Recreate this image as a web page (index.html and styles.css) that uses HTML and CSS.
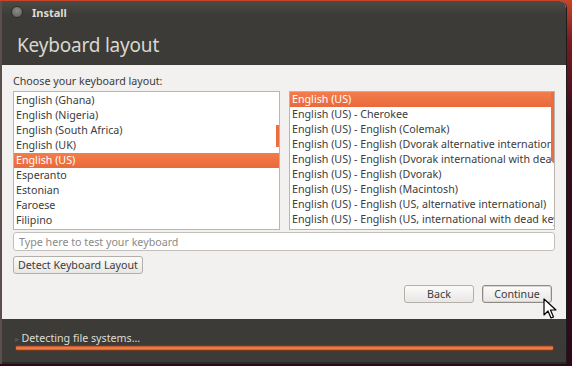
FILE: index.html
```html
<!DOCTYPE html>
<html lang="en">
<head>
  <meta charset="UTF-8" />
  <title>Install</title>
  <link rel="stylesheet" href="styles.css">
</head>
<body>

<div class="window">
  <!-- Title bar -->
  <div class="titlebar">
    <div class="title-row">
      <span class="close-btn"></span>
      <span class="title">Install</span>
    </div>
    <h1>Keyboard layout</h1>
  </div>

  <!-- Page content -->
  <div class="content">
    <div class="label">Choose your keyboard layout:</div>
    <div class="lists">
      <div class="list left-list">
        <div class="item">English (Ghana)</div>
        <div class="item">English (Nigeria)</div>
        <div class="item">English (South Africa)</div>
        <div class="item">English (UK)</div>
        <div class="item selected">English (US)</div>
        <div class="item">Esperanto</div>
        <div class="item">Estonian</div>
        <div class="item">Faroese</div>
        <div class="item">Filipino</div>
        <div class="thumb thumb-left"></div>
      </div>
      <div class="list right-list">
        <div class="item selected">English (US)</div>
        <div class="item">English (US) - Cherokee</div>
        <div class="item">English (US) - English (Colemak)</div>
        <div class="item">English (US) - English (Dvorak alternative international no dead keys)</div>
        <div class="item">English (US) - English (Dvorak international with dead keys)</div>
        <div class="item">English (US) - English (Dvorak)</div>
        <div class="item">English (US) - English (Macintosh)</div>
        <div class="item">English (US) - English (US, alternative international)</div>
        <div class="item">English (US) - English (US, international with dead keys)</div>
        <div class="thumb thumb-right"></div>
      </div>
    </div>
    <input class="test-input" type="text" placeholder="Type here to test your keyboard" />
    <div class="detect-row">
      <button class="btn">Detect Keyboard Layout</button>
    </div>
    <div class="nav-row">
      <button class="btn nav-btn">Back</button>
      <button class="btn nav-btn focused">Continue</button>
    </div>
    <svg class="cursor" width="14" height="22" viewBox="0 0 14 22">
      <path d="M1 1 L1 17 L5 13 L8 20 L10.5 19 L7.5 12 L13 12 Z" fill="#fff" stroke="#000" stroke-width="1.2" stroke-linejoin="round"/>
    </svg>
  </div>

  <!-- Progress area -->
  <div class="progress-area">
    <div class="progress-label"><span class="arrow">&#9656;</span>Detecting file systems...</div>
    <div class="progress-bar"></div>
  </div>
</div>

</body>
</html>
```

FILE: styles.css
```css
* { box-sizing: border-box; }

body, html {
  margin: 0;
  padding: 0;
  height: 100%;
  font-family: "Noto Sans", "DejaVu Sans", sans-serif;
  background: linear-gradient(to bottom, #c8442a 0px, #7a1c22 40px, #3a0c1c 120px, #2c0a1a 100%);
  overflow: hidden;
}

.window {
  width: 567px;
  height: 363px;
  margin-top: 1px;
  background: #f2f1f0;
  border-left: 2px solid #5a4f4c;
  border-right: 1px solid #1e1c1a;
  border-radius: 0 7px 0 0;
  overflow: hidden;
  display: flex;
  flex-direction: column;
  position: relative;
}

.titlebar {
  height: 64px;
  background: linear-gradient(to bottom, #4b4a45, #3c3b37 14px);
  color: #dfdbd2;
  padding: 0 0 0 7px;
}

.title-row {
  display: flex;
  align-items: center;
  height: 22px;
}

.close-btn {
  width: 12px;
  height: 12px;
  border-radius: 50%;
  background: radial-gradient(circle at 50% 35%, #8d8b86, #5c5b57);
  border: 1px solid #2e2d2a;
  margin-left: 2px;
}

.title {
  font-size: 11px;
  font-weight: bold;
  margin-left: 9px;
  color: #dfdbd2;
}

h1 {
  margin: 9px 0 0 8px;
  font-size: 19px;
  font-weight: normal;
  color: #d9d7d0;
  letter-spacing: -0.2px;
}

.content {
  flex: 1;
  padding: 9px 0 0 11px;
  font-size: 10.7px;
  color: #3c3c3c;
  position: relative;
}

.label {
  height: 15px;
  line-height: 15px;
  margin-bottom: 2px;
}

.lists {
  display: flex;
  gap: 9px;
}

.list {
  position: relative;
  height: 139px;
  background: #fff;
  border: 1px solid #b9b6b2;
  overflow: hidden;
}

.left-list { width: 267px; }
.right-list { width: 266px; }

.item {
  height: 15px;
  line-height: 15px;
  padding-left: 2px;
  white-space: nowrap;
  overflow: hidden;
  color: #3c3c3c;
}

.left-list .item:first-child { margin-top: 1px; }

.item.selected {
  background: linear-gradient(to bottom, #f37d4c, #e9693a);
  color: #fff;
}

.thumb {
  position: absolute;
  right: 0;
  width: 3px;
  background: #ec6d3d;
}

.thumb-left { top: 33px; height: 22px; }
.thumb-right { top: 0; height: 69px; }

.test-input {
  display: block;
  width: 542px;
  height: 19px;
  margin-top: 2px;
  border: 1px solid #c3c0bb;
  border-radius: 3px;
  background: #fff;
  font-family: inherit;
  font-size: 10.7px;
  padding: 0 5px;
  outline: none;
}

.test-input::placeholder { color: #8c8a86; }

.detect-row {
  margin-top: 5px;
  height: 18px;
}

.btn {
  height: 18px;
  padding: 0 4px;
  font-family: inherit;
  font-size: 10.7px;
  color: #3c3c3c;
  background: linear-gradient(to bottom, #fbfbfa, #e9e7e4);
  border: 1px solid #b3b0ab;
  border-radius: 3px;
}

.nav-row {
  display: flex;
  justify-content: flex-end;
  gap: 8px;
  margin-top: 11px;
  padding-right: 14px;
}

.nav-btn { width: 70px; }

.btn.focused {
  border: 1px solid #8e8b86;
  box-shadow: inset 0 0 0 1px #d8d6d2;
}

.cursor {
  position: absolute;
  left: 541px;
  top: 233px;
}

.progress-area {
  height: 45px;
  background: #3c3b37;
  padding: 13px 0 0 13px;
  border-bottom: 2px solid #2b2a27;
}

.progress-label {
  font-size: 10.7px;
  color: #dfdbd2;
  height: 13px;
  line-height: 13px;
}

.arrow {
  color: #55534f;
  font-size: 9px;
  margin-right: 2px;
}

.progress-bar {
  width: 539px;
  height: 6px;
  border-radius: 2px;
  background: linear-gradient(to bottom, #b84a1c, #f08a5a 50%, #d0581f);
  border: 1px solid #6e3a20;
}
```
